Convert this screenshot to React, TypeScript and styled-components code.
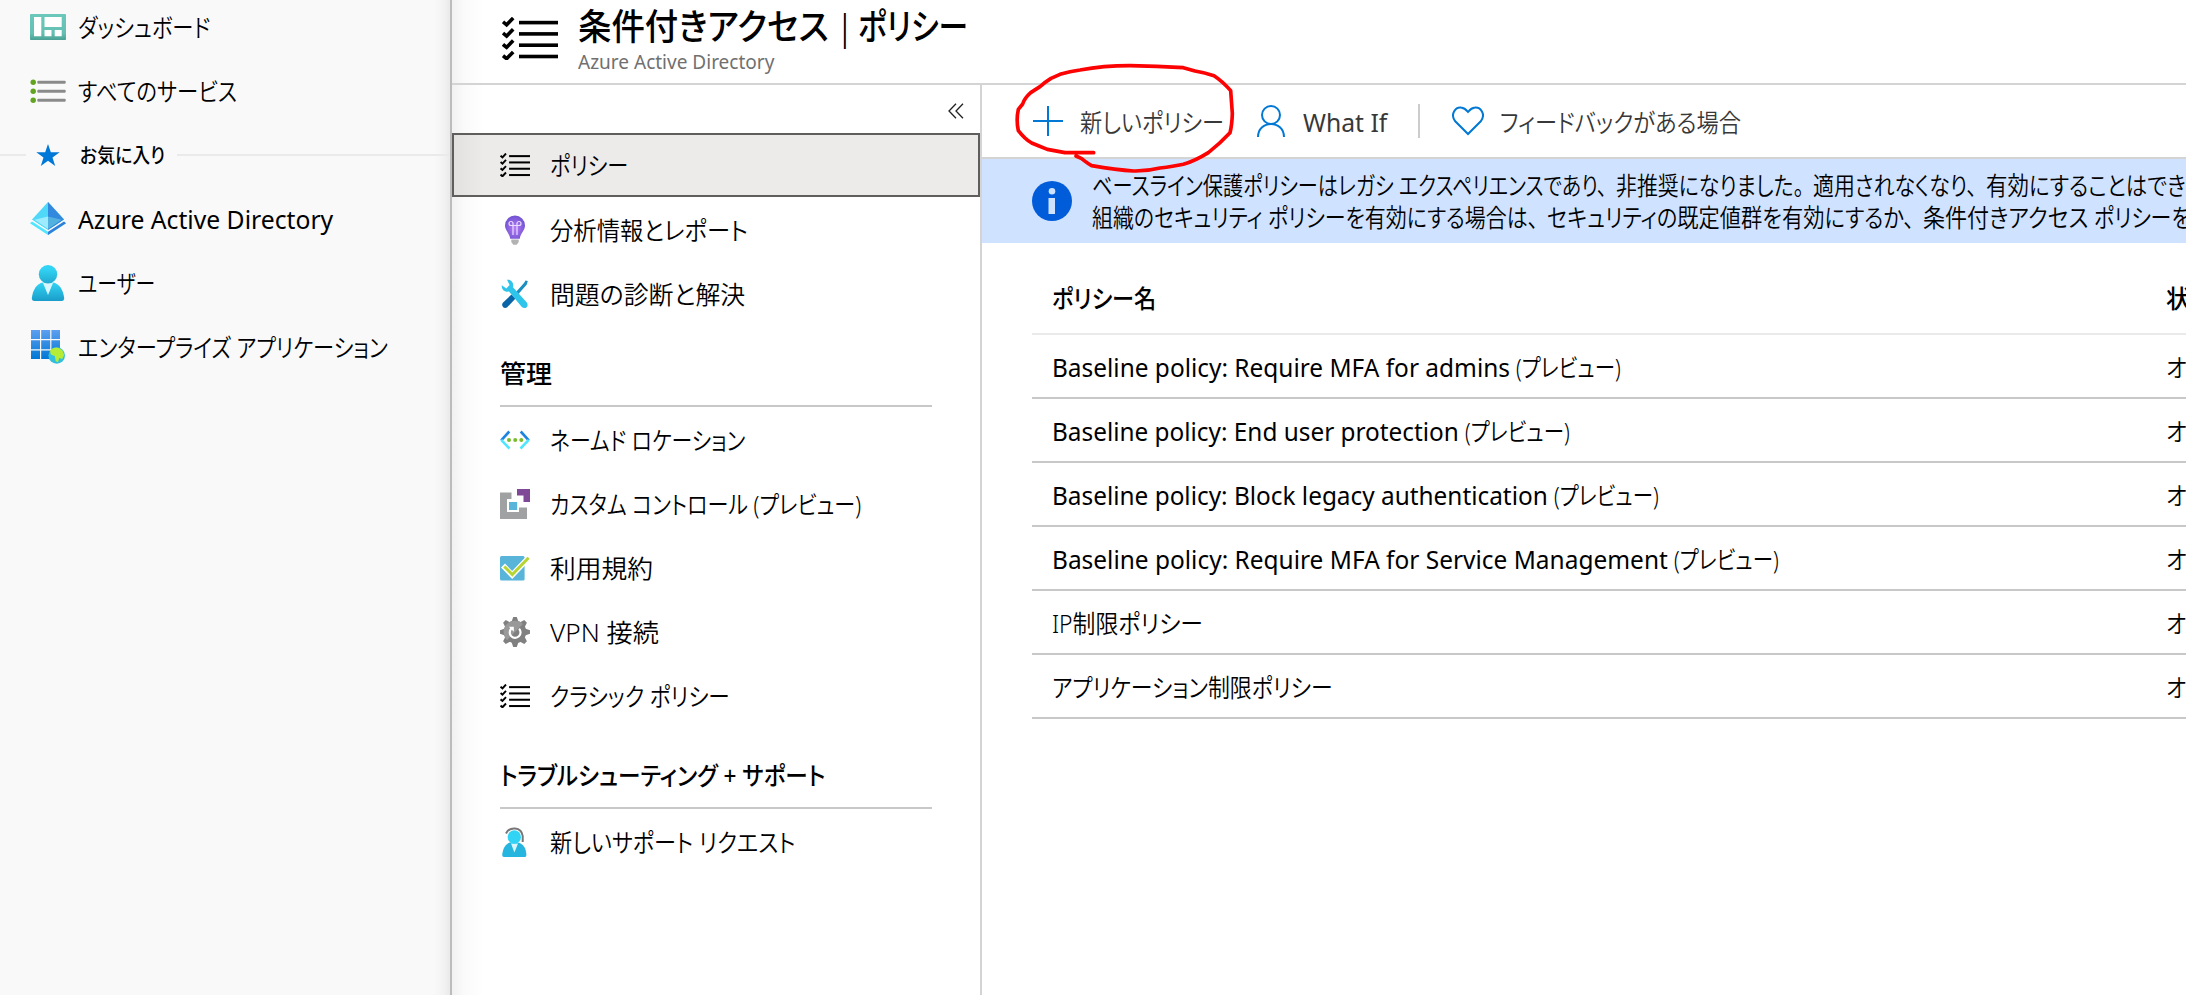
import React, { useLayoutEffect, useRef, useState } from 'react';
import styled, { createGlobalStyle } from 'styled-components';

const GlobalStyle = createGlobalStyle`
  * { box-sizing: border-box; }
  html, body { margin: 0; padding: 0; background: #fff; overflow: hidden; }
  body {
    font-family: "Noto Sans", "Noto Sans CJK JP", sans-serif;
    font-size: 25px;
    line-height: 32px;
    color: #000;
    font-feature-settings: "palt";
    font-weight: 350;
  }
  svg { display: block; flex: none; }
`;

/* ---------- text fitted to a fixed advance ---------- */

const FitBox = styled.span<{ $w: number; $latin: boolean }>`
  display: inline-block;
  flex: none;
  width: ${(p) => p.$w}px;
  white-space: nowrap;
  vertical-align: top;
  ${(p) => p.$latin && 'font-weight: 400;'}
`;

const FitInner = styled.span`
  display: inline-block;
  transform-origin: 0 50%;
  white-space: pre;
`;

function Fit({ w, children }: { w: number; children: string }) {
  const ref = useRef<HTMLSpanElement>(null);
  const [scale, setScale] = useState(1);
  // full-width punctuation keeps its trailing blank
  const tail = /[、。]$/.test(children) ? 9 : 0;
  useLayoutEffect(() => {
    if (ref.current && ref.current.offsetWidth) setScale((w - tail) / ref.current.offsetWidth);
  }, [w, tail, children]);
  return (
    <FitBox $w={w} $latin={/^[ -~]+$/.test(children)}>
      <FitInner ref={ref} style={{ transform: `scaleX(${scale})` }}>{children}</FitInner>
    </FitBox>
  );
}

/* ---------- icons ---------- */

const DashboardIcon = () => (
  <svg width="36" height="26" viewBox="0 0 36 26">
    <defs>
      <linearGradient id="dash" x1="0" y1="0" x2="0" y2="1">
        <stop offset="0" stopColor="#6bc8ba" />
        <stop offset=".75" stopColor="#63bfb1" />
        <stop offset="1" stopColor="#4a9f93" />
      </linearGradient>
    </defs>
    <rect width="36" height="26" rx=".8" fill="url(#dash)" />
    <path d="M4 3h7.300v19.300H4zM14.500 3h17.200v10H14.500zM14.500 16h7v6.300h-7zM24.700 16h7v6.300h-7z" fill="#fff" />
  </svg>
);

const ServicesIcon = () => (
  <svg width="36" height="26" viewBox="0 0 36 26">
    {[3.5, 12.5, 21.5].map((y) => (
      <g key={y}>
        <circle cx="3.200" cy={y + 0.8} r="2.700" fill="#62a420" />
        <rect x="7.300" y={y - 0.7} width="28.400" height="3" rx="1" fill="#8a8a8a" />
      </g>
    ))}
  </svg>
);

const StarIcon = () => (
  <svg width="36" height="24" viewBox="0 0 36 24">
    <path d="M18 0l2.800 8.300h8.900l-7.200 5.200 2.700 8.500-7.200-5.200-7.200 5.200 2.700-8.500-7.200-5.200h8.900z" fill="#0078d7" />
  </svg>
);

const AadIcon = () => (
  <svg width="36" height="34" viewBox="0 0 36 34">
    <path d="M18 0L34 17.500 18 28.500 2 17.500z" fill="#50d8f8" />
    <path d="M18 0L34 17.500 18 28.500z" fill="#3289de" />
    <path d="M18 14.500L31.500 17.800 18 27z" fill="#53b1e0" />
    <path d="M18 14.500L4.500 17.800 18 27z" fill="#9cebff" />
    <path d="M2.600 19L18 28.800 33.400 19 36 21.200 18 33 0 21.200z" fill="#50e6ff" />
    <path d="M18 28.800L33.400 19 36 21.200 18 33z" fill="#2f80d8" />
    <path d="M2 18.800L18 28.900 34 18.800" fill="none" stroke="#f9f9f9" strokeWidth="1.300" />
  </svg>
);

const UserIcon = () => (
  <svg width="36" height="36" viewBox="0 0 36 36">
    <defs>
      <linearGradient id="usr" x1="0" y1="0" x2="0" y2="1">
        <stop offset="0" stopColor="#32d4f5" />
        <stop offset="1" stopColor="#1a9cc9" />
      </linearGradient>
      <linearGradient id="usrH" x1="0" y1="0" x2="0" y2="1">
        <stop offset=".2" stopColor="#32d4f5" />
        <stop offset="1" stopColor="#21a9d0" />
      </linearGradient>
    </defs>
    <path d="M4 36q-2.200 0-2.200-2.400C2.500 25 7 18.500 13 17.600h10c6 .9 10.500 7.400 11.200 16Q34.200 36 32 36z" fill="url(#usr)" />
    <path d="M13 18h10l-5 12z" fill="#d8f6fd" />
    <circle cx="18" cy="9.200" r="9.200" fill="url(#usrH)" />
  </svg>
);

const AppsIcon = () => (
  <svg width="36" height="34" viewBox="0 0 36 34">
    <defs>
      <linearGradient id="grd" x1="0" y1="0" x2="0" y2="29" gradientUnits="userSpaceOnUse">
        <stop offset="0" stopColor="#5e9ff0" />
        <stop offset="1" stopColor="#0078d4" />
      </linearGradient>
    </defs>
    <path d="M1 0h9v9H1zM11.200 0h9v9h-9zM21.400 0h8.600v9h-8.600zM1 10.200h9v9H1zM11.200 10.200h9v9h-9zM21.400 10.200h8.600v9h-8.600zM1 20.400h9v8.600H1zM11.200 20.400h9v8.600h-9z" fill="url(#grd)" />
    <circle cx="26.700" cy="25.500" r="8.300" fill="#32bedd" />
    <path d="M20 20.500q4-4.500 9-2.500l3.500 2.500 1.700 4.500-2 4-3-1-1.200 4.200-2.200-1-1-5.200-4-1.500z" fill="#b4ec36" />
  </svg>
);

const ChecklistIcon = ({ w, h, bar = 3.6 }: { w: number; h: number; bar?: number }) => (
  <svg width={w} height={h} viewBox="0 0 56 43" preserveAspectRatio="none">
    {[0, 11.300, 22.600, 33.900].map((y) => (
      <g key={y} transform={`translate(0 ${y})`}>
        <path d="M1 4.800l3.600 3L11.200 1" fill="none" stroke="#000" strokeWidth="3.600" />
        <rect x="17" y={5.6 - bar / 2} width="39" height={bar} fill="#000" />
      </g>
    ))}
  </svg>
);

const BulbIcon = () => (
  <svg width="30" height="30" viewBox="0 0 30 30">
    <defs>
      <radialGradient id="blb" cx=".5" cy=".55" r=".6">
        <stop offset="0" stopColor="#b77af4" />
        <stop offset="1" stopColor="#6a4fcf" />
      </radialGradient>
    </defs>
    <path d="M15 .5a10 10 0 0110 10c0 5-4.300 7-5.200 13.300h-9.600C9.300 17.500 5 15.500 5 10.500a10 10 0 0110-10z" fill="url(#blb)" />
    <path d="M11.300 24.500h7.400v2.600l-2 2.600h-3.400l-2-2.600z" fill="#b3b3b3" />
    <path d="M13 20V10.500h-2a2 2 0 112-2v2h4v-2a2 2 0 112 2h-2V20" fill="none" stroke="#eadcff" strokeWidth="1.200" />
  </svg>
);

const ToolsIcon = () => (
  <svg width="30" height="30" viewBox="0 0 30 30">
    <path d="M25.500 1.500l2.300.5-1 3.500-11 12.500-2.500-2L24 4z" fill="#1c8fc0" />
    <path d="M11.500 15.500l4 4L7 28.500q-2.500 1-4-.6t-.4-3.900z" fill="#0a64a8" />
    <path d="M7 .8c4-.8 7.200 3 6 7.400l13.800 15.300c2.600 3.800-1.600 7.300-5 4.500L9 12.500c-4.400.9-7.600-2-7.200-6.300l4.500 3.200 3.300-3.500z" fill="#2fc4ea" />
  </svg>
);

const LocationIcon = () => (
  <svg width="30" height="20" viewBox="0 0 30 20">
    <g fill="none" strokeWidth="2.600">
      <path d="M1.200 10.400L9.300 1.500" stroke="#1b85e0" />
      <path d="M1.200 9.800l8.300 8.700" stroke="#50e6ff" />
      <path d="M28.800 10.400L20.700 1.500" stroke="#1b85e0" />
      <path d="M28.800 9.800l-8.300 8.700" stroke="#50e6ff" />
    </g>
    {[9, 15.200, 21.300].map((x) => <circle key={x} cx={x} cy="10" r="2" fill="#76bc2d" />)}
  </svg>
);

const CustomIcon = () => (
  <svg width="30" height="30" viewBox="0 0 30 30">
    <path d="M0 3.500h11.500v6.500H7v13h12v-4.500h8V30H0z" fill="#a0a1a2" />
    <path d="M17 0h13v13h-6.500V6.500H17z" fill="#804998" />
    <rect x="9" y="13" width="8.200" height="8" fill="#59b4d9" />
  </svg>
);

const TermsIcon = () => (
  <svg width="30" height="26" viewBox="0 0 30 26">
    <rect y="1" width="24.600" height="24.500" rx="1.500" fill="#59b4d9" />
    <path d="M3 10.500l9.200 9.500L29 2.500" fill="none" stroke="#fff" strokeWidth="5.600" />
    <path d="M4.300 11.500l8 8L28.600 2.700" fill="none" stroke="#b8d432" strokeWidth="3" />
  </svg>
);

const GearIcon = () => (
  <svg width="30" height="30" viewBox="0 0 30 30">
    {[0, 45, 90, 135].map((a) => (
      <path key={a} d="M13.200 0h3.600l1.700 5v20l-1.700 5h-3.600l-1.700-5V5z" fill="#808080" transform={`rotate(${a} 15 15)`} />
    ))}
    <circle cx="15" cy="15" r="11.200" fill="#808080" />
    <path d="M7 23A11.200 11.200 0 0122.900 7z" fill="#999" />
    <path d="M11.300 11.600a5.400 5.400 0 107.800.1" fill="none" stroke="#fff" strokeWidth="2.200" />
    <path d="M8.800 9.800h5v5z" fill="#fff" />
  </svg>
);

const SupportIcon = () => (
  <svg width="30" height="30" viewBox="0 0 30 30">
    <path d="M6 6.500C9-.5 21.500-.8 22.700 9v6" fill="none" stroke="#777" strokeWidth="2" />
    <path d="M4 30q-2-.2-1.800-2.500C3 21 6 16.500 10 15.500h8c5 1 8 5.500 8.400 12Q26.500 30 25 30z" fill="#26b5de" />
    <path d="M11 16.500h7l-3.600 9z" fill="#d8f6fd" />
    <circle cx="14.300" cy="10" r="6.700" fill="#32d4f5" />
  </svg>
);

const PlusIcon = () => (
  <svg width="30" height="30" viewBox="0 0 30 30"><path d="M15 0v30M0 15h30" stroke="#0078d4" strokeWidth="2" /></svg>
);

const PersonIcon = () => (
  <svg width="28" height="32" viewBox="0 0 28 32" fill="none" stroke="#0078d4" strokeWidth="2">
    <circle cx="14" cy="10" r="9" />
    <path d="M1 32C1 14.500 27 14.500 27 32" />
  </svg>
);

const HeartIcon = () => (
  <svg width="32" height="30" viewBox="0 0 32 30" fill="none" stroke="#0078d4" strokeWidth="2">
    <path d="M16 28L3 15C-2 8 3.500 1 9 1.500c3 .2 5 2 7 4.500 2-2.500 4-4.300 7-4.500 5.500-.5 11 6.500 6 13.500z" />
  </svg>
);

const InfoIcon = () => (
  <svg width="40" height="40" viewBox="0 0 40 40">
    <circle cx="20" cy="20" r="20" fill="#015cda" />
    <circle cx="20" cy="10.300" r="3.300" fill="#cfe2ff" />
    <rect x="16.500" y="17" width="6.500" height="16" fill="#cfe2ff" />
  </svg>
);

const CollapseIcon = () => (
  <svg width="16" height="16" viewBox="0 0 16 16" fill="none" stroke="#222" strokeWidth="1.300">
    <path d="M8 .8L1 8l7 7.200M15 .8L8 8l7 7.200" />
  </svg>
);

/* ---------- layout ---------- */

const Page = styled.div`
  position: relative;
  display: flex;
  width: 2186px;
  height: 995px;
  overflow: hidden;
  background: #fff;
`;

const Sidebar = styled.nav`
  flex: none;
  width: 452px;
  border-right: 2px solid #bcbcbc;
  background: linear-gradient(to left, #eaeaea 0, #f3f3f3 7px, #f9f9f9 16px);
`;

const SideList = styled.div`
  margin-top: -5px;
`;

const SideRow = styled.div`
  display: flex;
  align-items: center;
  height: 64px;
  padding: 0 0 0 30px;
  gap: 12px;
`;

const Favorites = styled(SideRow)`
  padding: 0;
  gap: 0;
  font-size: 20px;
  line-height: 34px;
  font-weight: 500;
`;

const Rule = styled.span<{ $w?: number }>`
  height: 2px;
  background: #eaeaea;
  ${(p) => (p.$w ? `width: ${p.$w}px; flex: none;` : 'flex: 1;')}
`;

const FavLabel = styled.span`
  display: flex;
  align-items: center;
  padding: 2px 12px 0 4px;
  gap: 14px;
`;

const Blade = styled.main`
  flex: 1;
  min-width: 0;
  display: flex;
  flex-direction: column;
`;

const Header = styled.header`
  display: flex;
  flex: none;
  height: 85px;
  padding: 17px 0 0 50px;
  gap: 20px;
  border-bottom: 2px solid #d4d4d4;
  background: linear-gradient(to right, #f1f1f1 0, #fafafa 12px, #fff 32px);
`;

const Titles = styled.div`
  display: flex;
  flex-direction: column;
  margin-top: -12px;
`;

const Title = styled.h1`
  display: flex;
  margin: 0;
  font-size: 36px;
  line-height: 44px;
  font-weight: 500;
`;

const Subtitle = styled.div`
  font-size: 19.500px;
  line-height: 26px;
  font-weight: 400;
  color: #707070;
`;

const BladeBody = styled.div`
  display: flex;
  flex: 1;
  min-height: 0;
`;

const Menu = styled.aside`
  flex: none;
  width: 530px;
  border-right: 2px solid #d4d4d4;
  background: linear-gradient(to right, #f1f1f1 0, #fafafa 12px, #fff 32px);
`;

const CollapseBar = styled.div`
  display: flex;
  justify-content: flex-end;
  height: 48px;
  padding: 18px 16px 0 0;
`;

const MenuItem = styled.div<{ $selected?: boolean }>`
  display: flex;
  align-items: center;
  height: 64px;
  padding-top: 1px;
  padding-left: ${(p) => (p.$selected ? 46 : 48)}px;
  gap: 20px;
  ${(p) => p.$selected && `
    padding-top: 0;
    border: 2px solid #605e5c;
    background: linear-gradient(to right, #e2e1e0 0, #ecebea 30px);
  `}
`;

const Section = styled.h2`
  margin: 0 48px;
  height: 82px;
  padding-top: 32px;
  border-bottom: 2px solid #c8c8c8;
  font-size: 25px;
  line-height: 32px;
  font-weight: 500;
`;

const Content = styled.section`
  flex: 1;
  min-width: 0;
`;

const Toolbar = styled.div`
  display: flex;
  align-items: center;
  height: 74px;
  padding-left: 51px;
  border-bottom: 2px solid #d4d4d4;
  color: #383838;
  line-height: 34px;
`;

const Command = styled.div<{ $gap: number; $after: number }>`
  display: flex;
  align-items: center;
  gap: ${(p) => p.$gap}px;
  margin-right: ${(p) => p.$after}px;
`;

const CommandLabel = styled.span`
  padding-top: 2px;
`;

const Separator = styled.span`
  width: 2px;
  height: 34px;
  margin-right: 32px;
  background: #ccc;
`;

const Banner = styled.div`
  display: flex;
  align-items: center;
  height: 84px;
  padding-left: 50px;
  gap: 20px;
  background: #cfe2ff;
  overflow: hidden;
`;

const BannerLine = styled.div`
  display: flex;
  height: 32px;
  line-height: 32px;
  white-space: nowrap;
`;

const Table = styled.div`
  margin-left: 50px;
`;

const Row = styled.div<{ $head?: boolean }>`
  display: flex;
  align-items: ${(p) => (p.$head ? 'flex-end' : 'center')};
  height: ${(p) => (p.$head ? 92 : 64)}px;
  padding: ${(p) => (p.$head ? '0 0 19px 20px' : '1px 0 0 20px')};
  border-bottom: 2px solid ${(p) => (p.$head ? '#eaeaea' : '#c8c8c8')};
  font-weight: ${(p) => (p.$head ? 500 : 'inherit')};
  white-space: nowrap;
`;

const NameCell = styled.div`
  flex: none;
  display: flex;
  width: 1114px;
`;

const Marker = styled.svg`
  position: absolute;
  left: 970px;
  top: 50px;
  pointer-events: none;
`;

type Part = [string, number];

const menuTop: [React.ReactNode, string, number][] = [
  [<BulbIcon />, '分析情報とレポート', 198],
  [<ToolsIcon />, '問題の診断と解決', 195],
];

const manage: [React.ReactNode, string, number][] = [
  [<LocationIcon />, 'ネームド ロケーション', 195],
  [<CustomIcon />, 'カスタム コントロール (プレビュー)', 311],
  [<TermsIcon />, '利用規約', 103],
  [<GearIcon />, 'VPN 接続', 109],
  [<ChecklistIcon w={30} h={24} bar={3.6} />, 'クラシック ポリシー', 180],
];

const sideTop: [React.ReactNode, string, number][] = [
  [<DashboardIcon />, 'ダッシュボード', 132],
  [<ServicesIcon />, 'すべてのサービス', 159],
];

const sideFav: [React.ReactNode, string, number][] = [
  [<AadIcon />, 'Azure Active Directory', 255],
  [<UserIcon />, 'ユーザー', 77],
  [<AppsIcon />, 'エンタープライズ アプリケーション', 310],
];

const bannerLines: Part[][] = [
  [
    ['ベースライン保護ポリシーはレガシ ', 307],
    ['エクスペリエンスであり、', 217],
    ['非推奨になりました。', 197],
    ['適用されなくなり、', 173],
    ['有効にすることはできません。', 279],
  ],
  [
    ['組織のセキュリティ ', 176],
    ['ポリシーを有効にする場合は、', 279],
    ['セキュリティの既定値群を有効にするか、', 376],
    ['条件付きアクセス ', 171],
    ['ポリシーを構成してください。', 268],
  ],
];

const policies: { parts: Part[]; state: string }[] = [
  { parts: [['Baseline policy: Require MFA for admins ', 464], ['(プレビュー)', 105]], state: 'オフ' },
  { parts: [['Baseline policy: End user protection ', 413], ['(プレビュー)', 105]], state: 'オフ' },
  { parts: [['Baseline policy: Block legacy authentication ', 502], ['(プレビュー)', 105]], state: 'オフ' },
  { parts: [['Baseline policy: Require MFA for Service Management ', 622], ['(プレビュー)', 105]], state: 'オフ' },
  { parts: [['IP制限ポリシー', 151]], state: 'オン' },
  { parts: [['アプリケーション制限ポリシー', 281]], state: 'オン' },
];

export default function App() {
  return (
    <>
      <GlobalStyle />
      <Page>
        <Sidebar>
          <SideList>
            {sideTop.map(([icon, label, w]) => (
              <SideRow key={label}>{icon}<Fit w={w}>{label}</Fit></SideRow>
            ))}
            <Favorites>
              <Rule $w={26} />
              <FavLabel><StarIcon /><Fit w={85}>お気に入り</Fit></FavLabel>
              <Rule />
            </Favorites>
            {sideFav.map(([icon, label, w]) => (
              <SideRow key={label}>{icon}<Fit w={w}>{label}</Fit></SideRow>
            ))}
          </SideList>
        </Sidebar>
        <Blade>
          <Header>
            <ChecklistIcon w={56} h={43} />
            <Titles>
              <Title>
                <Fit w={260}>条件付きアクセス </Fit>
                <Fit w={20}>| </Fit>
                <Fit w={110}>ポリシー</Fit>
              </Title>
              <Subtitle><Fit w={196}>Azure Active Directory</Fit></Subtitle>
            </Titles>
          </Header>
          <BladeBody>
            <Menu>
              <CollapseBar><CollapseIcon /></CollapseBar>
              <MenuItem $selected><ChecklistIcon w={30} h={24} bar={3.6} /><Fit w={78}>ポリシー</Fit></MenuItem>
              {menuTop.map(([icon, label, w]) => (
                <MenuItem key={label}>{icon}<Fit w={w}>{label}</Fit></MenuItem>
              ))}
              <Section><Fit w={52}>管理</Fit></Section>
              {manage.map(([icon, label, w]) => (
                <MenuItem key={label}>{icon}<Fit w={w}>{label}</Fit></MenuItem>
              ))}
              <Section><Fit w={325}>トラブルシューティング + サポート</Fit></Section>
              <MenuItem><SupportIcon /><Fit w={245}>新しいサポート リクエスト</Fit></MenuItem>
            </Menu>
            <Content>
              <Toolbar>
                <Command $gap={17} $after={33}><PlusIcon /><CommandLabel><Fit w={144}>新しいポリシー</Fit></CommandLabel></Command>
                <Command $gap={18} $after={31}><PersonIcon /><CommandLabel><Fit w={84}>What If</Fit></CommandLabel></Command>
                <Separator />
                <Command $gap={16} $after={0}><HeartIcon /><CommandLabel><Fit w={241}>フィードバックがある場合</Fit></CommandLabel></Command>
              </Toolbar>
              <Banner>
                <InfoIcon />
                <div>
                  {bannerLines.map((line, i) => (
                    <BannerLine key={i}>{line.map(([t, w]) => <Fit key={t} w={w}>{t}</Fit>)}</BannerLine>
                  ))}
                </div>
              </Banner>
              <Table>
                <Row $head>
                  <NameCell><Fit w={104}>ポリシー名</Fit></NameCell>
                  <Fit w={50}>状態</Fit>
                </Row>
                {policies.map((p) => (
                  <Row key={p.parts[0][0]}>
                    <NameCell>{p.parts.map(([t, w]) => <Fit key={t} w={w}>{t}</Fit>)}</NameCell>
                    <Fit w={39}>{p.state}</Fit>
                  </Row>
                ))}
              </Table>
            </Content>
          </BladeBody>
        </Blade>
        <Marker width="400" height="140" viewBox="0 0 1200 420">
          <path
            d="M371 308H285L232 298 207 288 185 279Q165 268 145 242 138 210 145 178L158 162Q163 145 182 128L210 110Q225 96 243 85L270 73Q300 64 330 60 400 47 480 47 560 48 640 53L675 63Q705 68 732 77 758 94 782 122L787 190Q786 225 780 248 750 280 715 308 675 333 640 343 610 350 570 354 530 364 490 363 440 360 365 347 345 335 335 326L318 318"
            fill="none" stroke="#fd0202" strokeWidth="11" strokeLinecap="round" strokeLinejoin="round"
          />
        </Marker>
      </Page>
    </>
  );
}
